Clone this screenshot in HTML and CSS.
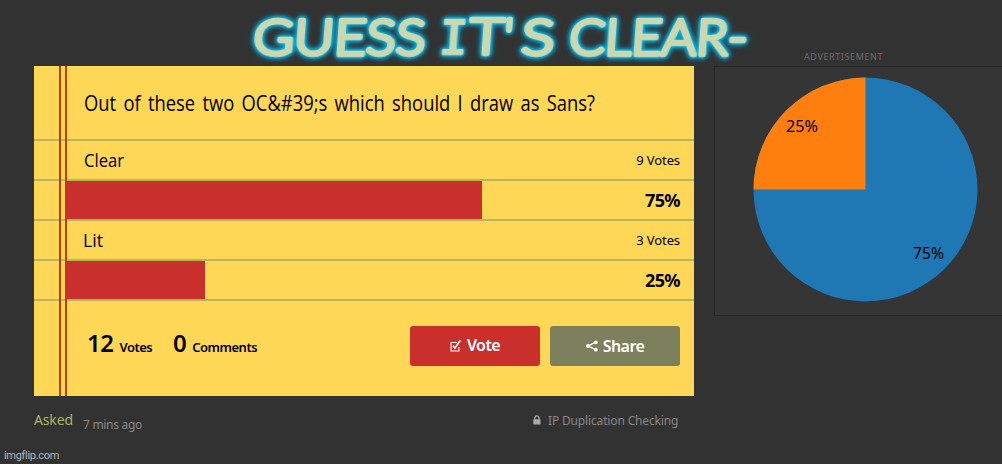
FILE: index.html
```
<!DOCTYPE html>
<html lang="en">
<head>
    <meta charset="UTF-8">
    <meta name="viewport" content="width=device-width, initial-scale=1.0">
    <title>Poll</title>
    <link rel="stylesheet" href="styles.css">
</head>
<body>
    <header>
        <svg class="caption" width="1002" height="66" viewBox="0 0 1002 66">
            <text x="254" y="54.5" textLength="172" lengthAdjust="spacingAndGlyphs">GUESS</text>
            <text class="slab" x="440" y="53.5" textLength="28" lengthAdjust="spacingAndGlyphs">I</text>
            <text x="470" y="53.5" textLength="34" lengthAdjust="spacingAndGlyphs">T</text>
            <text x="504" y="53.5">'</text>
            <text x="522" y="54.5" textLength="33" lengthAdjust="spacingAndGlyphs">S</text>
            <text x="570" y="54.5" textLength="178" lengthAdjust="spacingAndGlyphs">CLEAR-</text>
        </svg>
    </header>

    <div class="page">
        <main>
            <div class="poll">
                <div class="question">
                    <svg width="560" height="40" viewBox="0 0 560 40">
                        <text x="-1" y="26" textLength="511" lengthAdjust="spacingAndGlyphs">Out of these two OC&amp;#39;s which should I draw as Sans?</text>
                    </svg>
                </div>
                <div class="row option">
                    <svg width="60" height="30" viewBox="0 0 60 30">
                        <text x="0" y="22" textLength="40" lengthAdjust="spacingAndGlyphs">Clear</text>
                    </svg>
                    <span class="count">9 Votes</span>
                </div>
                <div class="row">
                    <div class="bar" style="width: 417px"></div>
                    <span class="percent">75%</span>
                </div>
                <div class="row option">
                    <svg width="60" height="30" viewBox="0 0 60 30">
                        <text x="-1" y="22" textLength="20" lengthAdjust="spacingAndGlyphs">Lit</text>
                    </svg>
                    <span class="count">3 Votes</span>
                </div>
                <div class="row">
                    <div class="bar" style="width: 140px"></div>
                    <span class="percent">25%</span>
                </div>
                <div class="actions">
                    <div class="stat"><b>12</b><span>Votes</span></div>
                    <div class="stat comments"><b>0</b><span>Comments</span></div>
                    <a class="button vote">
                        <svg width="12" height="13" viewBox="0 0 12 13">
                            <path d="M7 3.5H1V12H9V8" fill="none" stroke="#fff" stroke-width="1.1"/>
                            <path d="M3 6.8L4.9 9.2L10.4 1.2" fill="none" stroke="#fff" stroke-width="1.6"/>
                        </svg>
                        <span>Vote</span>
                    </a>
                    <a class="button share">
                        <svg width="12" height="12" viewBox="0 0 12 12">
                            <path d="M9.8 2.2L2.2 6L9.8 9.8" fill="none" stroke="#fff" stroke-width="1.3"/>
                            <circle cx="9.8" cy="2.3" r="1.9" fill="#fff"/>
                            <circle cx="2.1" cy="6" r="2" fill="#fff"/>
                            <circle cx="9.8" cy="9.7" r="1.9" fill="#fff"/>
                        </svg>
                        <span>Share</span>
                    </a>
                </div>
            </div>
            <div class="meta">
                <span class="asked">Asked</span>
                <span class="time">7 mins ago</span>
                <svg width="8" height="10" viewBox="0 0 8 10">
                    <rect x="0.3" y="4.2" width="7.2" height="5.2" rx="0.6" fill="#aaa"/>
                    <path d="M1.8 4.5V3A2.1 2.1 0 0 1 6 3V4.5" fill="none" stroke="#aaa" stroke-width="1.3"/>
                </svg>
                <span class="checking">IP Duplication Checking</span>
            </div>
        </main>

        <aside>
            <div class="ad-label">ADVERTISEMENT</div>
            <div class="ad">
                <svg width="287" height="248" viewBox="0 0 287 248">
                    <circle cx="150.5" cy="122.5" r="112" fill="#1f77b4"/>
                    <path d="M150.5 122.5V10.5A112 112 0 0 0 38.5 122.5Z" fill="#ff7f0e"/>
                    <text x="71" y="65" textLength="32" lengthAdjust="spacingAndGlyphs">25%</text>
                    <text x="198" y="192" textLength="31" lengthAdjust="spacingAndGlyphs">75%</text>
                </svg>
            </div>
        </aside>
    </div>

    <footer>imgflip.com</footer>
</body>
</html>
```
FILE: styles.css
```
* {
    box-sizing: border-box;
}

body {
    margin: 0;
    height: 464px;
    overflow: hidden;
    display: flex;
    flex-direction: column;
    background-color: #323232;
    font-family: "Noto Sans", sans-serif;
    color: #000;
}

svg {
    display: block;
    flex-shrink: 0;
    overflow: visible;
}

header {
    height: 50px;
}

.caption {
    font-family: Lato, sans-serif;
    font-size: 49px;
    font-weight: 300;
    fill: #cbd8af;
    stroke: #cbd8af;
    stroke-width: 4.4px;
    stroke-linejoin: round;
    transform: skewX(-4deg);
    filter: drop-shadow(0 0 1px #00b9ea) drop-shadow(0 0 2px #00b5e6) drop-shadow(0 0 2px #00a5d6);
}

.caption .slab {
    font-family: "DejaVu Sans Mono", monospace;
    font-size: 46px;
    stroke-width: 2.4px;
}

.page {
    display: flex;
    gap: 20px;
    padding-left: 34px;
}

main {
    width: 660px;
    padding-top: 16px;
}

.poll {
    position: relative;
    height: 330px;
    background-color: #ffd757;
}

/* margin rule of the notepad */
.poll::before {
    content: "";
    position: absolute;
    top: 0;
    bottom: 0;
    left: 25px;
    width: 4px;
    border: solid #b7430c;
    border-width: 0 2px;
}

.question {
    height: 75px;
    padding: 19px 0 0 51px;
    border-bottom: 2px solid #b9b55f;
    font-family: "Open Sans", sans-serif;
    font-size: 22px;
    word-spacing: 3px;
}

.row {
    display: flex;
    align-items: center;
    justify-content: space-between;
    height: 40px;
    padding: 0 14px 0 31px;
    border-bottom: 2px solid #b9b55f;
}

.option {
    padding-left: 50px;
    font-family: "Open Sans", sans-serif;
    font-size: 18px;
}

.bar {
    position: relative;
    height: 38px;
    background-color: #c9302c;
}

.count {
    font-family: "Noto Sans", sans-serif;
    font-size: 13px;
    letter-spacing: -0.1px;
}

.percent {
    font-size: 18px;
    font-weight: 700;
    letter-spacing: -0.6px;
}

.actions {
    display: flex;
    padding: 25px 14px 0 53px;
}

.stat {
    display: flex;
    align-items: baseline;
    gap: 6px;
    width: 86px;
    height: 40px;
    font-size: 13px;
    font-weight: 600;
    letter-spacing: -0.5px;
}

.stat b {
    font-size: 24px;
    font-weight: 600;
    line-height: 34px;
    letter-spacing: -0.5px;
}

.comments {
    width: 237px;
}

.button {
    display: flex;
    align-items: center;
    justify-content: center;
    gap: 5px;
    width: 130px;
    height: 40px;
    border-radius: 3px;
    color: #fff;
    font-size: 16px;
    font-weight: 600;
    letter-spacing: -0.6px;
    flex-shrink: 0;
}

.vote {
    padding-bottom: 2px;
    background-color: #c9302c;
}

.share {
    margin-left: 10px;
    background-color: #7c805c;
}

.meta {
    display: flex;
    align-items: center;
    height: 48px;
    font-size: 12px;
    letter-spacing: -0.15px;
    color: #888;
}

.asked {
    width: 49px;
    padding-bottom: 2px;
    font-size: 14px;
    color: #a9b665;
}

.time {
    width: 450px;
    padding-top: 8px;
    letter-spacing: -0.3px;
}

.checking {
    margin-left: 7px;
    white-space: nowrap;
}

aside {
    width: 288px;
}

.ad-label {
    height: 16px;
    padding-left: 90px;
    font-size: 9px;
    line-height: 14px;
    letter-spacing: 0.6px;
    color: #6d6d6d;
}

.ad {
    height: 250px;
    border: 1px solid #282828;
    border-right: none;
    background-color: #353535;
    font-size: 16px;
}

footer {
    margin-top: auto;
    padding: 0 0 1px 4px;
    font-family: Roboto, sans-serif;
    font-size: 11px;
    line-height: 14px;
    letter-spacing: -0.3px;
    color: #b5b5b5;
}
```
